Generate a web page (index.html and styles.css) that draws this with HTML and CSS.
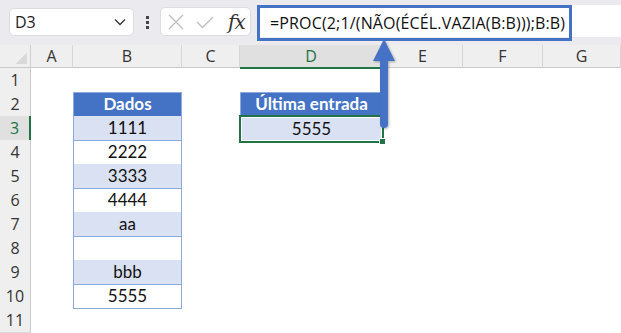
FILE: index.html
```html
<!DOCTYPE html>
<html lang="pt">
<head>
    <meta charset="UTF-8">
    <title>PROC última entrada</title>
    <link rel="stylesheet" href="styles.css">
</head>
<body>
<div id="app">
    <div class="toolbar">
        <div class="namebox">
            <span>D3</span>
            <svg width="12" height="8" viewBox="0 0 12 8"><path d="M1 1.5 L6 6.5 L11 1.5" fill="none" stroke="#333" stroke-width="1.3"/></svg>
        </div>
        <div class="dots"><i></i><i></i><i></i></div>
        <div class="fxbox">
            <svg width="18" height="18" viewBox="0 0 18 18"><path d="M2 2 L16 16 M16 2 L2 16" stroke="#bdbdbd" stroke-width="1.3"/></svg>
            <svg width="18" height="18" viewBox="0 0 18 18"><path d="M1 9 L6.5 14.5 L17 4" fill="none" stroke="#bdbdbd" stroke-width="1.3"/></svg>
            <span class="fx">fx</span>
        </div>
        <div class="formula">
            <div class="formula-text">=PROC(2;1/(NÃO(ÉCÉL.VAZIA(B:B)));B:B)</div>
        </div>
    </div>

    <div class="sheet">
        <div class="row colheads">
            <div class="corner"></div>
            <div class="ch">A</div>
            <div class="ch">B</div>
            <div class="ch">C</div>
            <div class="ch sel">D</div>
            <div class="ch">E</div>
            <div class="ch">F</div>
            <div class="ch">G</div>
        </div>
        <div class="row"><div class="rh">1</div></div>
        <div class="row">
            <div class="rh">2</div>
            <div class="cell colB thead top">Dados</div>
            <div class="cell colD thead top">Última entrada</div>
        </div>
        <div class="row">
            <div class="rh sel">3</div>
            <div class="cell colB band">1111</div>
            <div class="cell colD active">5555<span class="handle"></span></div>
        </div>
        <div class="row">
            <div class="rh">4</div>
            <div class="cell colB">2222</div>
        </div>
        <div class="row">
            <div class="rh">5</div>
            <div class="cell colB band">3333</div>
        </div>
        <div class="row">
            <div class="rh">6</div>
            <div class="cell colB">4444</div>
        </div>
        <div class="row">
            <div class="rh">7</div>
            <div class="cell colB band">aa</div>
        </div>
        <div class="row">
            <div class="rh">8</div>
            <div class="cell colB"></div>
        </div>
        <div class="row">
            <div class="rh">9</div>
            <div class="cell colB band">bbb</div>
        </div>
        <div class="row">
            <div class="rh">10</div>
            <div class="cell colB">5555</div>
        </div>
        <div class="row"><div class="rh">11</div></div>
    </div>

    <!-- seta apontando para a barra de fórmulas -->
    <svg class="arrow" width="30" height="100" viewBox="0 0 30 100">
        <defs>
            <filter id="sh" x="-50%" y="-20%" width="200%" height="140%">
                <feDropShadow dx="1" dy="1" stdDeviation="1" flood-color="#000" flood-opacity="0.3"/>
            </filter>
        </defs>
        <g filter="url(#sh)" fill="#4472c4">
            <path d="M15 2 L26 24 L19 24 L19 87 Q19 91 15 91 Q11 91 11 87 L11 24 L4 24 Z"/>
        </g>
    </svg>
</div>
</body>
</html>
```

FILE: styles.css
```css
body {
    margin: 0;
    background: #fff;
    font-family: "Open Sans", "Noto Sans", sans-serif;
}

#app {
    position: relative;
    width: 621px;
    height: 333px;
    overflow: hidden;
}

/* barra superior */
.toolbar {
    height: 45px;
    background: #ebeaef;
    display: flex;
    align-items: flex-start;
}

.namebox {
    margin: 8px 0 0 9px;
    width: 125px;
    height: 28px;
    box-sizing: border-box;
    background: #fff;
    border: 1px solid #dcdbe0;
    border-radius: 5px;
    display: flex;
    align-items: center;
    justify-content: space-between;
    padding: 0 7px 0 5px;
    font-size: 16px;
    color: #222;
}

.dots {
    width: 26px;
    height: 45px;
    display: flex;
    flex-direction: column;
    align-items: center;
    justify-content: center;
    gap: 2px;
}

.dots i {
    width: 3px;
    height: 3px;
    background: #444;
}

.fxbox {
    margin-top: 7px;
    width: 91px;
    height: 29px;
    box-sizing: border-box;
    background: #fff;
    border: 1px solid #dcdbe0;
    border-radius: 5px;
    display: flex;
    align-items: center;
    padding: 0 5px 0 6px;
    gap: 11px;
}

.fx {
    font-family: "DejaVu Serif", "Liberation Serif", serif;
    font-style: italic;
    font-size: 20px;
    color: #333;
    margin-left: 3px;
    letter-spacing: -1px;
}

.formula {
    flex: 1;
    margin: 5px 0 0 6px;
    height: 32px;
    background: #fff;
}

.formula-text {
    width: 315px;
    height: 36px;
    box-sizing: border-box;
    border: 3px solid #4472c4;
    padding: 0 0 0 10px;
    font-size: 16px;
    letter-spacing: 0.15px;
    line-height: 30px;
    color: #111;
    white-space: nowrap;
    position: relative;
    z-index: 2;
}

/* planilha */
.row {
    display: grid;
    grid-template-columns: 31px 42px 109px 58px 143px 80px 80px 78px;
    height: 24px;
}

.colheads {
    height: 23px;
    background: #efefef;
    border-bottom: 1px solid #c9c9c9;
    box-sizing: border-box;
}

.corner {
    border-right: 1px solid #d0d0d0;
    background: linear-gradient(135deg, transparent 58%, #d9d9d9 58%) no-repeat;
    background-size: 14px 14px;
    background-position: right 3px bottom 4px;
}

.ch {
    border-right: 1px solid #d6d6d6;
    text-align: center;
    font-size: 16px;
    line-height: 22px;
    color: #333;
}

.ch.sel {
    background: #e0e0e0;
    color: #217346;
    border-bottom: 2px solid #217346;
    margin-bottom: -1px;
}

.rh {
    grid-column: 1;
    background: #efefef;
    border-right: 1px solid #c9c9c9;
    border-bottom: 1px solid #dadada;
    text-align: center;
    font-size: 16px;
    line-height: 24px;
    color: #333;
}

.rh.sel {
    background: #e0e0e0;
    color: #217346;
    border-right: 2px solid #217346;
}

.cell {
    font-family: "Lato", "Open Sans", sans-serif;
    font-size: 17px;
    line-height: 23px;
    text-align: center;
    color: #111;
    border-left: 1px solid #8ea9db;
    border-right: 1px solid #8ea9db;
    border-bottom: 1px solid #8ea9db;
}

.colB {
    grid-column: 3;
}

.colD {
    grid-column: 5;
}

.thead {
    background: #4472c4;
    color: #fff;
    font-weight: bold;
    border-color: #8ea9db;
    border-top: 1px solid #8ea9db;
    line-height: 22px;
}

.band {
    background: #d9e1f2;
}

.active {
    position: relative;
    background: #d9e1f2;
    border: 2px solid #217346;
    box-shadow: inset 0 0 0 1px #fff;
    margin: -1px -1px -2px -1px;
    line-height: 23px;
}

.handle {
    position: absolute;
    right: -4px;
    bottom: -4px;
    width: 5px;
    height: 5px;
    background: #217346;
    border: 1px solid #fff;
}

.arrow {
    position: absolute;
    left: 369px;
    top: 37px;
    z-index: 3;
}
```
